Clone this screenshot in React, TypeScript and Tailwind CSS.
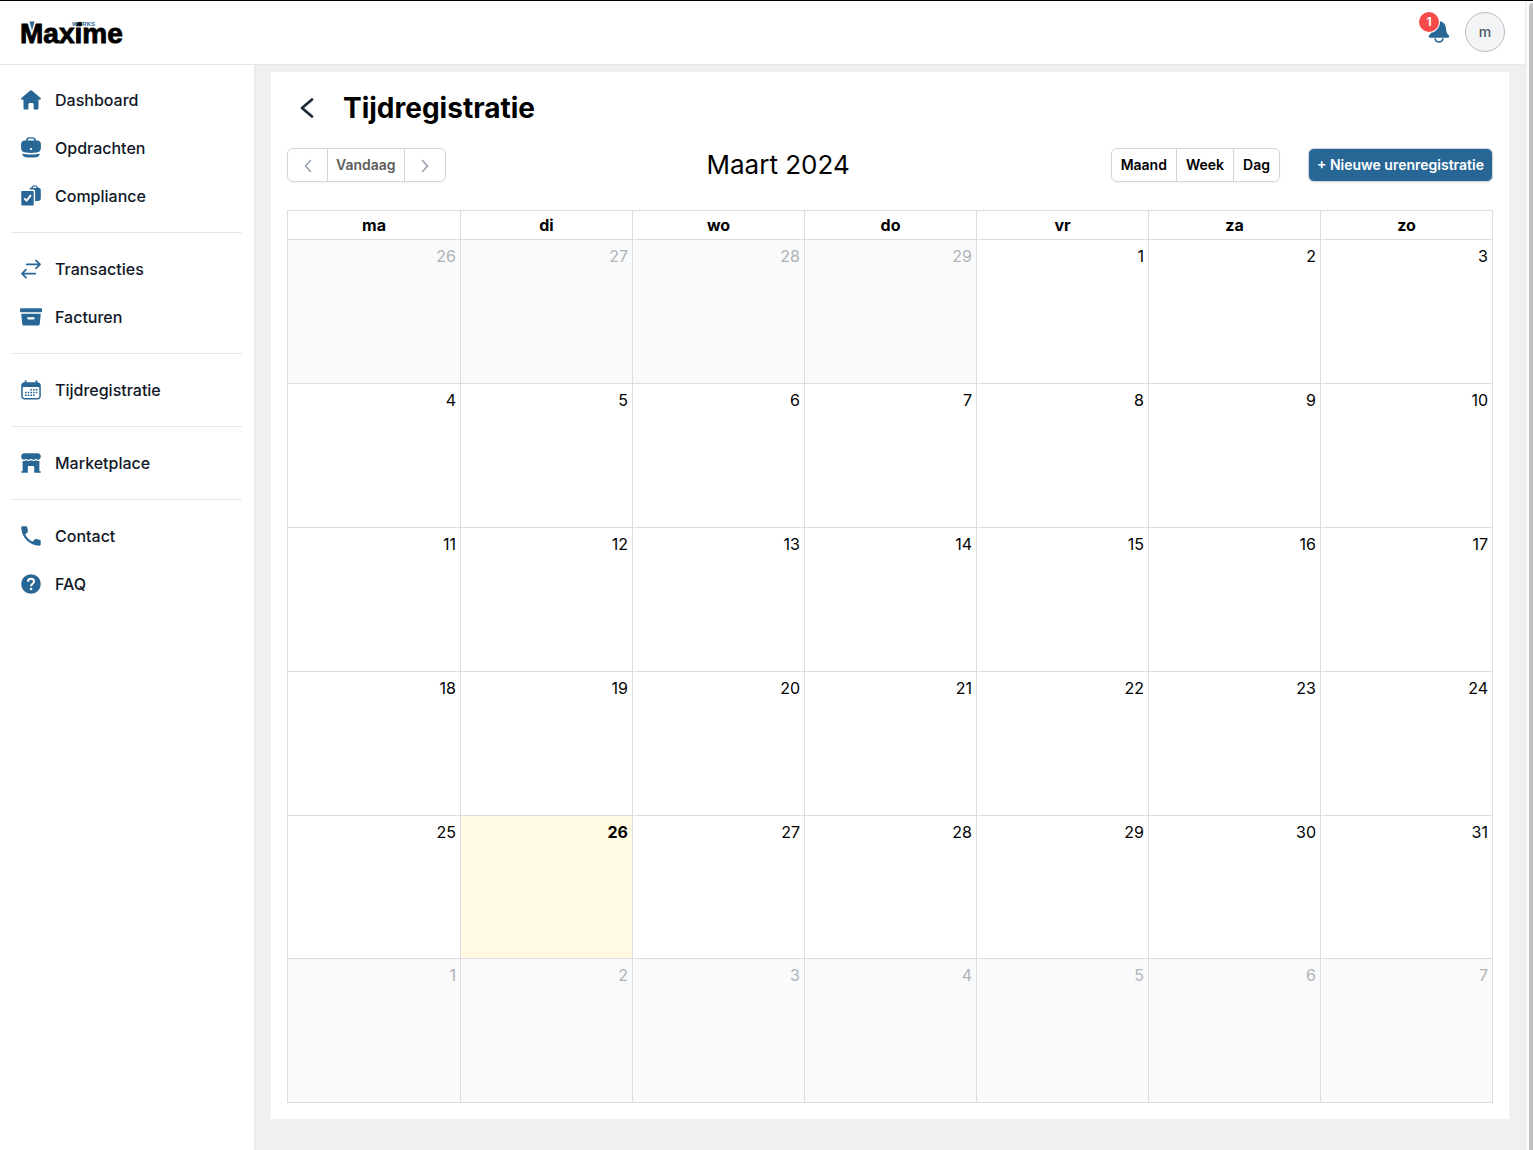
import React from 'react';

type IconProps = { children: React.ReactNode };

const Icon: React.FC<IconProps> = ({ children }) => (
  <svg viewBox="0 0 24 24" className="h-6 w-6 shrink-0" fill="currentColor" aria-hidden="true">
    {children}
  </svg>
);

const HomeIcon = () => (
  <Icon>
    <path d="M11.2 2.5a1.2 1.2 0 0 1 1.6 0l8.8 7.6c.7.6.3 1.7-.6 1.7h-1.5v8.4c0 .8-.6 1.3-1.3 1.3h-2.6c-.6 0-1-.4-1-1V16.5c0-.9-.6-1.5-1.5-1.5h-2.2c-.9 0-1.5.6-1.5 1.5v4c0 .6-.4 1-1 1H5.8c-.8 0-1.3-.5-1.3-1.3v-8.4H3c-.9 0-1.3-1.1-.6-1.7z" />
  </Icon>
);

const BriefcaseIcon = () => (
  <Icon>
    <path
      fillRule="evenodd"
      d="M7 4.4C7.2 2.4 8.5 1.2 10.2 1.2h3.6c1.7 0 3 1.2 3.2 3.2h1.2c2.2 0 3.7 1.5 3.7 3.7v4.2c0 2.3-1.8 4-4.3 4.3-3.7.5-7.5.5-11.200 0-2.500-.3-4.300-2-4.300-4.300V8.100c0-2.200 1.500-3.700 3.700-3.700zM8.600 4.600h6.800c-.1-1.200-.8-2-1.900-2h-3c-1.100 0-1.800.8-1.900 2zM12 12a1.100 1.100 0 1 0 0 2.200 1.100 1.100 0 0 0 0-2.200z"
    />
    <path d="M3.3 17.4c1 .5 2.3.8 3.6.9 3.4.3 6.8.3 10.2 0 1.3-.1 2.6-.4 3.6-.9-.3 2.500-1.700 3.700-3.800 3.900-3.300.3-6.500.3-9.800 0-2.100-.2-3.500-1.400-3.800-3.900z" />
  </Icon>
);

const ComplianceIcon = () => (
  <Icon>
    <path
      fillRule="evenodd"
      d="M3.3 6.9h10.4c.6 0 1 .4 1 1v12.7c0 .6-.4 1-1 1H3.3c-.6 0-1-.4-1-1V7.900c0-.6.4-1 1-1zM5.800 13.700l-1.300 1.300 3.200 3.100 5-6.300-1.500-1.200-3.700 4.700z"
    />
    <path
      fillRule="evenodd"
      d="M10.5 5.600c0-1.500 1-2.200 2-2.200C13 2 14.200 1.200 15.700 1.200S18.400 2 18.900 3.400c1.800 0 2.900 1.100 2.900 2.700v8.400c0 1.500-1 2.400-2.500 2.400h-3.200V7.400c0-1-.8-1.800-1.800-1.800zM13.700 4h4c-.3-.9-1.100-1.400-2-1.400s-1.700.5-2 1.400z"
    />
  </Icon>
);

const TransferIcon = () => (
  <Icon>
    <g fill="none" stroke="currentColor" strokeWidth="1.7" strokeLinecap="round" strokeLinejoin="round">
      <path d="M7.7 7.4H21M17 3.400l4 4-4 4" />
      <path d="M16.3 16.6H3M7 12.600l-4 4 4 4" />
    </g>
  </Icon>
);

const ArchiveIcon = () => (
  <Icon>
    <rect x="1" y="3.3" width="22" height="4" rx="1" />
    <path
      fillRule="evenodd"
      d="M2.2 8.8h19.6l-1 9.9c-.1 1.100-.9 1.800-2 1.800H5.200c-1.100 0-1.900-.7-2-1.800zM9.300 12.200a1.100 1.100 0 0 0 0 2.200h5.400a1.100 1.100 0 0 0 0-2.200z"
    />
  </Icon>
);

const CalendarIcon = () => (
  <Icon>
    <path
      fillRule="evenodd"
      d="M6.6 2.2c.5 0 .9.4.9.9v1.1h9V3.1a.9.9 0 0 1 1.8 0v1.1c2.1 0 3.5 1.3 3.5 3.4v10.5c0 2.1-1.4 3.5-3.5 3.5H5.7c-2.1 0-3.5-1.4-3.5-3.5V7.6c0-2.1 1.4-3.4 3.5-3.4V3.1c0-.5.4-.9.9-.9zM3.7 10v7.9c0 1.4.9 2.2 2.2 2.2h12.2c1.4 0 2.2-.8 2.2-2.2V10c0-.6-.4-1-1-1H4.7c-.6 0-1 .4-1 1z"
    />
    <g fill="none" stroke="currentColor" strokeWidth="1.6" strokeDasharray="1.6 1.1">
      <path d="M11.4 11.7h7M6 14.500h12.400M6 17.300h9.700" />
    </g>
  </Icon>
);

const StoreIcon = () => (
  <Icon>
    <path d="M5.3 2.3h13.4c2 0 3.1 1.4 3.1 3.3 0 1.9-1 3.1-2.6 3.1-.9 0-1.6-.4-2.2-1-.6.7-1.4 1-2.4 1s-1.9-.3-2.6-1c-.7.7-1.6 1-2.6 1s-1.8-.3-2.4-1c-.6.6-1.3 1-2.2 1-1.6 0-2.6-1.2-2.6-3.1 0-1.9 1.1-3.3 3.1-3.3z" />
    <path d="M3.6 10c1.1.2 2.2 0 3.2-.8 1.6 1 3.6 1 5.2.1 1.6.9 3.6.9 5.2-.1 1 .8 2.1 1 3.2.8v10.3h.9c.8 0 .8 1.5 0 1.5h-6.1v-5.6c0-.7-.4-1.1-1.1-1.1H9.9c-.7 0-1.1.4-1.1 1.1v5.6H2.7c-.8 0-.8-1.5 0-1.5h.9z" />
  </Icon>
);

const PhoneIcon = () => (
  <Icon>
    <path d="M3.5 2.3h3.4c.7 0 1.2.4 1.3 1.1l.7 3.6c.1.5 0 .9-.3 1.2L6.2 10.6c1.6 3 4.2 5.6 7.2 7.2l2.4-2.4c.3-.3.7-.4 1.2-.3l3.6.7c.7.1 1.1.6 1.1 1.3v3.4c0 .7-.5 1.2-1.2 1.2C10.7 21.7 2.3 13.3 2.3 3.5c0-.7.5-1.2 1.2-1.2z" />
  </Icon>
);

const HelpIcon = () => (
  <Icon>
    <circle cx="12" cy="12" r="9.8" />
    <path
      d="M9 9.7c0-1.8 1.3-2.9 3-2.9s3 1.1 3 2.7c0 2.2-2.9 2.3-2.9 4.7"
      fill="none"
      stroke="white"
      strokeWidth="2"
    />
    <circle cx="12.1" cy="17" r="1.3" fill="white" />
  </Icon>
);

const navGroups = [
  [
    { label: 'Dashboard', icon: <HomeIcon /> },
    { label: 'Opdrachten', icon: <BriefcaseIcon /> },
    { label: 'Compliance', icon: <ComplianceIcon /> },
  ],
  [
    { label: 'Transacties', icon: <TransferIcon /> },
    { label: 'Facturen', icon: <ArchiveIcon /> },
  ],
  [{ label: 'Tijdregistratie', icon: <CalendarIcon /> }],
  [{ label: 'Marketplace', icon: <StoreIcon /> }],
  [
    { label: 'Contact', icon: <PhoneIcon /> },
    { label: 'FAQ', icon: <HelpIcon /> },
  ],
];

const weekdays = ['ma', 'di', 'wo', 'do', 'vr', 'za', 'zo'];

// The grid starts on Monday 26 February 2024
const weeks = Array.from({ length: 6 }, (_, week) =>
  Array.from({ length: 7 }, (_, day) => {
    const date = new Date(2024, 1, 26 + week * 7 + day);
    return {
      date: date.getDate(),
      otherMonth: date.getMonth() !== 2,
      today: date.getMonth() === 2 && date.getDate() === 26,
    };
  })
);

const Logo = () => (
  <a href="#" aria-label="Maxime Works">
    <svg viewBox="0 0 112 34" className="h-[34px] w-28 overflow-visible">
      <text
        x="0"
        y="28"
        fontFamily="Liberation Sans, Arial, sans-serif"
        fontSize="28"
        fontWeight="700"
        stroke="black"
        strokeWidth="0.9"
      >
        Maxime
      </text>
      <path d="M8 6.5h8l-4 11z" fill="white" />
      <path d="M9.5 6.500h5l-2.500 9z" fill="#286795" />
      <text x="52" y="11" fontFamily="Liberation Sans, Arial, sans-serif" fontSize="6" fontWeight="700" fill="#286795">
        WORKS
      </text>
      <circle cx="60" cy="9" r="2.2" />
    </svg>
  </a>
);

const Header = () => (
  <header className="flex h-16 shrink-0 items-center justify-between border-b border-gray-200 bg-white px-5 pb-px">
    <Logo />
    <div className="flex items-center gap-[14px]">
      <button type="button" aria-label="Meldingen" className="relative text-[#286795]">
        <svg viewBox="0 0 24 24" className="h-6 w-6" fill="currentColor" aria-hidden="true">
          <path d="M12 1.2c4.2 0 6.7 3 6.9 6.6.2 4 .8 5.8 2.9 7.5.8.7.5 2.5-.8 2.5H3c-1.3 0-1.6-1.8-.8-2.5 2.1-1.7 2.7-3.5 2.9-7.5C5.3 4.2 7.8 1.2 12 1.2z" />
          <path d="M8 18.3c.4 2 2 3.6 4 3.6s3.6-1.6 4-3.6" fill="none" stroke="currentColor" strokeWidth="1.7" />
        </svg>
        <span className="absolute -top-2 -left-2 flex h-5 w-5 items-center justify-center rounded-full bg-[#f64a4a] text-xs font-bold text-white ring-1 ring-white">
          1
        </span>
      </button>
      <button
        type="button"
        className="flex h-10 w-10 items-center justify-center rounded-full border border-[#b9bcc2] bg-gray-100 text-sm font-medium text-gray-600"
      >
        m
      </button>
    </div>
  </header>
);

const Sidebar = () => (
  <nav className="w-[255px] shrink-0 border-r border-gray-200 bg-white py-[11px] pr-3 pl-[11px]">
    {navGroups.map((group, i) => (
      <ul key={i} className={i > 0 ? 'mt-3 border-t border-gray-200 pt-3' : ''}>
        {group.map((item) => (
          <li key={item.label}>
            <a href="#" className="flex h-12 items-center gap-3 px-2 text-base font-medium text-gray-900">
              <span className="text-[#286795]">{item.icon}</span>
              {item.label}
            </a>
          </li>
        ))}
      </ul>
    ))}
  </nav>
);

const Toolbar = () => (
  <div className="flex items-center justify-between">
    <div className="flex h-[34px] divide-x divide-gray-300 rounded-md border border-gray-300 text-sm font-semibold shadow-xs">
      <button type="button" aria-label="Vorige" className="flex w-10 items-center justify-center text-gray-400">
        <svg viewBox="0 0 20 20" className="h-5 w-5" fill="none" stroke="currentColor" strokeWidth="1.6" strokeLinecap="round">
          <path d="M12.500 5.500 7.500 11l5 5.500" />
        </svg>
      </button>
      <button type="button" className="px-2 text-[#5c5c5c]">Vandaag</button>
      <button type="button" aria-label="Volgende" className="flex w-10 items-center justify-center text-gray-400">
        <svg viewBox="0 0 20 20" className="h-5 w-5" fill="none" stroke="currentColor" strokeWidth="1.6" strokeLinecap="round">
          <path d="M7.500 5.500l5 5.500-5 5.500" />
        </svg>
      </button>
    </div>
    <h2 className="text-[26px] leading-8">Maart 2024</h2>
    <div className="flex gap-7 text-sm font-semibold">
      <div className="flex h-[34px] divide-x divide-gray-300 rounded-md border border-gray-300 shadow-xs">
        <button type="button" className="px-[9px]">Maand</button>
        <button type="button" className="px-[9px]">Week</button>
        <button type="button" className="px-[9px]">Dag</button>
      </div>
      <button type="button" className="h-[34px] rounded-md border border-gray-300 bg-[#286795] px-2 text-white shadow-xs">
        + Nieuwe urenregistratie
      </button>
    </div>
  </div>
);

const Calendar = () => (
  <div className="mt-7 aspect-[1.35]">
    <table className="h-full w-full table-fixed border-collapse">
      <thead>
        <tr className="h-[29px]">
          {weekdays.map((day) => (
            <th key={day} scope="col" className="border border-[#ddd] p-0 text-base leading-7 font-bold first:w-[173px]">
              {day}
            </th>
          ))}
        </tr>
      </thead>
      <tbody>
        {weeks.map((week, i) => (
          <tr key={i}>
            {week.map((day, j) => (
              <td
                key={j}
                className={`border border-[#ddd] px-1 pt-1 align-top text-right text-base ${
                  day.otherMonth ? 'bg-[#f9fafc] text-[#b1b2b3]' : ''
                } ${day.today ? 'bg-[#fffae1] font-bold' : ''}`}
              >
                {day.date}
              </td>
            ))}
          </tr>
        ))}
      </tbody>
    </table>
  </div>
);

const App: React.FC = () => {
  return (
    <div className="flex min-h-screen border-t border-black bg-[#fafafa] font-['Inter',sans-serif] text-black">
      <div className="flex min-w-0 flex-1 flex-col border-r border-gray-200">
        <Header />
        <div className="flex flex-1">
          <Sidebar />
          <main className="min-w-0 flex-1 bg-[#f0f0f0] px-4 pt-[7px] pb-8">
            <section className="bg-white p-4">
              <div className="mb-5 flex h-10 items-center gap-4">
                <button type="button" aria-label="Terug" className="flex h-10 w-10 items-center justify-center text-gray-800">
                  <svg viewBox="0 0 24 24" className="h-6 w-6" fill="none" stroke="currentColor" strokeWidth="2.7" strokeLinecap="round" strokeLinejoin="round">
                    <path d="M17 3.500 7 12l10 8.500" />
                  </svg>
                </button>
                <h1 className="text-[28px] font-bold">Tijdregistratie</h1>
              </div>
              <Toolbar />
              <Calendar />
            </section>
          </main>
        </div>
      </div>
      <div className="flex w-[7px] shrink-0 justify-end pt-[2px]">
        <div className="w-1 rounded-tl-md bg-[#c1c1c1]" />
      </div>
    </div>
  );
};

export default App;
